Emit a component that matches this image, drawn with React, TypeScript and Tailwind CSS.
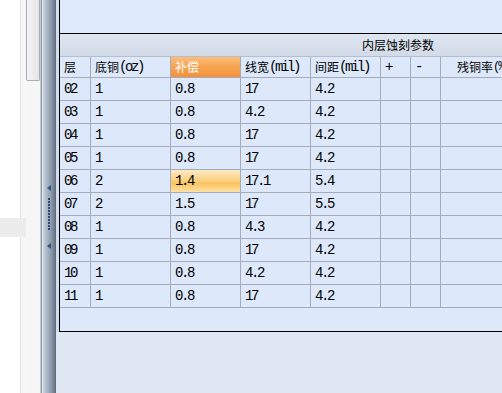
import React from "react";

const MONO = "font-['Liberation_Mono',monospace] text-[14px] tracking-[-2.4px]";
const CJK = "font-['Noto_Sans_CJK_SC',sans-serif] text-[12px]";

const M = ({ children }: { children: React.ReactNode }) => <span className={MONO}>{children}</span>;
const C = ({ children }: { children: React.ReactNode }) => <span className={CJK}>{children}</span>;

const widths = ["w-[31px]", "w-[80px]", "w-[70px]", "w-[70px]", "w-[70px]", "w-[30px]", "w-[30px]"];

const rows: string[][] = [
  ["02", "1", "0.8", "17", "4.2"],
  ["03", "1", "0.8", "4.2", "4.2"],
  ["04", "1", "0.8", "17", "4.2"],
  ["05", "1", "0.8", "17", "4.2"],
  ["06", "2", "1.4", "17.1", "5.4"],
  ["07", "2", "1.5", "17", "5.5"],
  ["08", "1", "0.8", "4.3", "4.2"],
  ["09", "1", "0.8", "17", "4.2"],
  ["10", "1", "0.8", "4.2", "4.2"],
  ["11", "1", "0.8", "17", "4.2"],
];

function Arrow() {
  return (
    <svg width="4" height="6" viewBox="0 0 4 6" className="block">
      <polygon points="4,0 0,3 4,6" fill="#34507a" />
    </svg>
  );
}

export default function App() {
  const headers: React.ReactNode[] = [
    <C>层</C>,
    <>
      <C>底铜</C>
      <M>(oz)</M>
    </>,
    <C>补偿</C>,
    <>
      <C>线宽</C>
      <M>(mil)</M>
    </>,
    <>
      <C>间距</C>
      <M>(mil)</M>
    </>,
    <M>+</M>,
    <M>-</M>,
  ];

  return (
    <div className="flex h-[393px] w-[502px] overflow-hidden bg-white text-black">
      {/* far left panel */}
      <div className="flex w-[26px] flex-col">
        <div className="flex h-[218px]">
          <div className="w-[20px] bg-white" />
          <div className="w-[1px] bg-[#e3e3e3]" />
          <div className="flex-1 bg-[#f7f7f7]" />
        </div>
        <div className="h-[19px] bg-[#ececec]" />
        <div className="flex flex-1">
          <div className="w-[20px] bg-white" />
          <div className="w-[1px] bg-[#e3e3e3]" />
          <div className="flex-1 bg-[#f7f7f7]" />
        </div>
      </div>

      {/* scrollbar */}
      <div className="flex w-[14px] flex-col bg-[#f6f6f6]">
        <div className="h-[81px] rounded-b-[2px] border border-t-0 border-[#a6adb6] bg-[linear-gradient(to_right,#f4f4f4,#e6e6e6)]" />
      </div>
      <div className="w-[1px] bg-[#c6ccd3]" />
      <div className="w-[1px] bg-[#8d99a8]" />

      {/* splitter */}
      <div className="flex w-[14px] flex-col items-center bg-[linear-gradient(to_right,#e9eef5_0%,#c3ccd8_14%,#a7b3c2_40%,#8794a5_70%,#6b788a_90%,#58657a_100%)] pt-[185px]">
        <Arrow />
        <div className="mt-[7px] flex flex-col gap-[1px]">
          {Array.from({ length: 11 }).map((_, i) => (
            <div key={i} className="h-[2px] w-[2px] bg-[#2e4a70]" />
          ))}
        </div>
        <div className="mt-[13px]">
          <Arrow />
        </div>
      </div>

      {/* main area */}
      <div className="flex min-w-0 flex-1 flex-col">
        <div className="flex h-[332px]">
          <div className="w-[3px] bg-[#d3dfee]" />
          <div className="flex min-w-0 flex-1 flex-col overflow-hidden border-b border-l border-black">
            <div className="h-[34px] shrink-0 border-b border-black bg-[#deeafb]" />
            <div className="flex h-[23px] shrink-0 items-center border-b border-[#b4bfcc] bg-[linear-gradient(to_bottom,#dee6f0,#d2dbe7)] pl-[302px]">
              <C>内层蚀刻参数</C>
            </div>
            <div className="flex h-[21px] shrink-0 border-b border-[#a3acb8] bg-[#dde9fa]">
              {headers.map((h, i) => (
                <div
                  key={i}
                  className={`${widths[i]} flex shrink-0 items-center whitespace-nowrap border-r border-[#a3acb8] pl-[4px] ${
                    i === 2
                      ? "bg-[linear-gradient(to_bottom,#fbbe7c_0%,#f7a553_45%,#f3913a_100%)] text-white"
                      : ""
                  }`}
                >
                  {h}
                </div>
              ))}
              <div className="flex min-w-0 flex-1 items-center overflow-hidden whitespace-nowrap pl-[16px]">
                <C>残铜率</C>
                <span className="font-['Liberation_Mono',monospace] text-[12px] tracking-[-2px]">(%)</span>
              </div>
            </div>
            {rows.map((r, ri) => (
              <div key={ri} className="flex h-[23px] shrink-0 border-b border-[#a3acb8] bg-[#dde9fa]">
                {widths.map((w, ci) => (
                  <div
                    key={ci}
                    className={`${w} flex shrink-0 items-center border-r border-[#a3acb8] pl-[4px] ${
                      ri === 4 && ci === 2
                        ? "bg-[linear-gradient(to_bottom,#fdeac4_0%,#fcd58e_40%,#fbc45f_62%,#fde2a6_100%)]"
                        : ""
                    }`}
                  >
                    {ci < 5 ? <M>{r[ci]}</M> : null}
                  </div>
                ))}
                <div className="min-w-0 flex-1" />
              </div>
            ))}
            <div className="flex-1 bg-[#dde9fa]" />
          </div>
        </div>
        <div className="flex-1 bg-[#dfe7f2]" />
      </div>
    </div>
  );
}
